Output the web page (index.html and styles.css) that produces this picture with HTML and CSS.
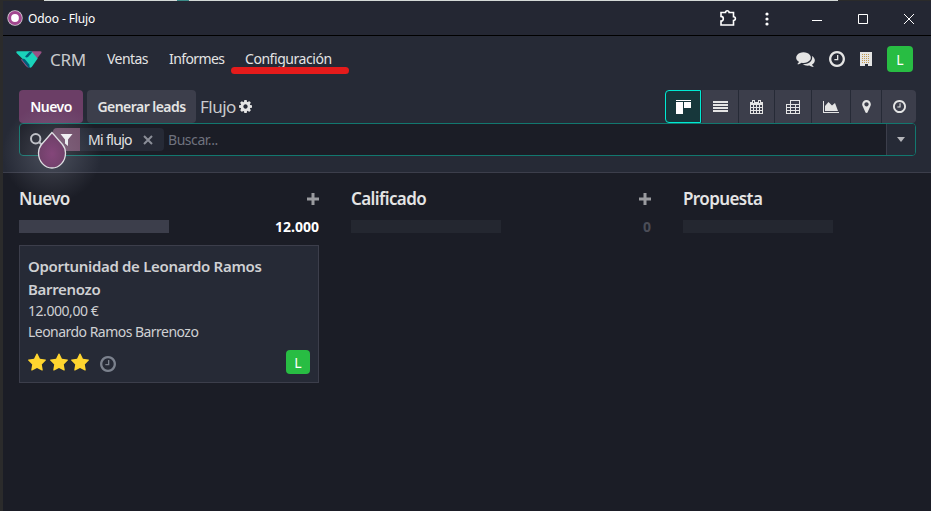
FILE: index.html
```html
<!DOCTYPE html>
<html lang="es">
<head>
<meta charset="utf-8">
<title>Odoo - Flujo</title>
<link rel="stylesheet" href="styles.css">
</head>
<body>
<svg width="0" height="0" class="defs">
  <symbol id="clock" viewBox="128 128 1536 1536"><path d="M1024 544v448q0 14-9 23t-23 9h-320q-14 0-23-9t-9-23v-64q0-14 9-23t23-9h224v-352q0-14 9-23t23-9h64q14 0 23 9t9 23zm416 352q0-148-73-273t-198-198-273-73-273 73-198 198-73 273 73 273 198 198 273 73 273-73 198-198 73-273zm224 0q0 209-103 385.500t-279.500 279.500-385.500 103-385.500-103-279.500-279.500-103-385.500 103-385.500 279.500-279.500 385.500-103 385.500 103 279.500 279.500 103 385.500z"/></symbol>
  <symbol id="star" viewBox="64 32 1664 1587"><path d="M1728 647q0 22-26 48l-363 354 86 500q1 7 1 20 0 21-10.500 35.500t-30.500 14.500q-19 0-40-12l-449-236-449 236q-22 12-40 12-21 0-31.500-14.500t-10.500-35.500q0-6 2-20l86-500-364-354q-25-27-25-48 0-37 56-46l502-73 225-455q19-41 49-41t49 41l225 455 502 73q56 9 56 46z"/></symbol>
  <symbol id="plus" viewBox="0 0 12 12"><path d="M4.500 0h3v4.500H12v3H7.500V12h-3V7.500H0v-3h4.500z"/></symbol>
</svg>
<div class="backdrop"></div>
<div class="window">
  <header class="titlebar">
    <svg class="favicon" viewBox="0 0 16 16"><circle cx="8" cy="8" r="7.700" fill="#d8d3d8"/><circle cx="8" cy="8" r="5.400" fill="#fff" stroke="#a2478f" stroke-width="3"/></svg>
    <span class="wintitle">Odoo - Flujo</span>
    <svg class="puzzle" viewBox="0 0 18 18"><path d="M2 3.500h4.500a1.800 1.800 0 0 1 3.600 0H14.500v4.200a1.900 1.900 0 0 1 0 3.800V16H2v-4a2.300 2.300 0 0 0 0-4.600z"/></svg>
    <svg class="dots" viewBox="0 0 4 14"><circle cx="2" cy="2" r="1.600"/><circle cx="2" cy="7" r="1.600"/><circle cx="2" cy="12" r="1.600"/></svg>
    <svg class="min" viewBox="0 0 10 10"><path d="M0 6.500h10"/></svg>
    <svg class="max" viewBox="0 0 10 10"><path d="M.5.5h9v9h-9z"/></svg>
    <svg class="close" viewBox="0 0 10 10"><path d="M0 0l10 10M10 0L0 10"/></svg>
  </header>
  <nav class="navbar">
    <svg class="logo" viewBox="0 0 27 17"><path d="M14 0h11q2 0 1.500 1.500L21.500 8 14 1z" fill="#985184"/><path d="M5 8.500L10 15q1.500 2 4 2L7 8z" fill="#985184"/><path d="M1.500 0H16l6.500 7.500L16.500 16q-.8 1-2 1L7 8 .8 2Q-.5 0 1.500 0z" fill="#1ad3bb"/><path d="M13 1.500Q14 0 17 0l-1 2-3.500 4q-2 1-3-.5zM6 8.500q2-1.500 3.500 0L14 14v3h-1z" fill="#005e7a"/></svg>
    <span class="app">CRM</span>
    <a class="menu m1">Ventas</a><a class="menu m2">Informes</a><a class="menu m3">Configuración<i class="mark"></i></a>
    <svg class="chat" viewBox="0 128 1792 1536"><path d="M1408 768q0 139-94 257t-256.500 186.500-353.500 68.500q-86 0-176-16-124 88-278 128-36 9-86 16h-3q-11 0-20.500-8t-11.500-21q-1-3-1-6.500t.5-6.500 2-6l2.500-5 3.500-5.500 4-5 4.500-5 4-4.500q5-6 23-25t26-29.500 22.500-29 25-38.500 20.500-44q-124-72-195-177t-71-224q0-139 94-257t256.500-186.500 353.500-68.500 353.500 68.500 256.500 186.500 94 257zm384 256q0 120-71 224.500t-195 176.500q10 24 20.500 44t25 38.500 22.500 29 26 29.500 23 25q1 1 4 4.500t4.500 5 4 5 3.500 5.500l2.500 5 2 6 .5 6.500-1 6.500q-3 14-13 22t-22 7q-50-7-86-16-154-40-278-128-90 16-176 16-271 0-472-132 58 4 88 4 161 0 309-45t264-129q125-92 192-212t67-254q0-77-23-152 129 71 204 178t75 230z"/></svg>
    <svg class="act"><use href="#clock"/></svg>
    <svg class="building" viewBox="0 0 12 14"><path d="M0 0h12v14H8v-2H5v2H0z" fill="#e4e4e4"/><path d="M2 2.500h8M2 4.500h8M2 6.500h8M2 8.500h8M2 10.500h8" stroke="#c39a50" stroke-dasharray="1 1"/></svg>
    <span class="avatar big">L</span>
  </nav>
  <section class="panel">
    <div class="tools">
      <button class="btn primary">Nuevo</button><button class="btn second">Generar leads</button>
      <span class="crumb">Flujo</span>
      <svg class="cog" viewBox="128 128 1536 1536"><path d="M1152 896q0-106-75-181t-181-75-181 75-75 181 75 181 181 75 181-75 75-181zm512-109v222q0 12-8 23t-20 13l-185 28q-19 54-39 91 35 50 107 138 10 12 10 25t-9 23q-27 37-99 108t-94 71q-12 0-26-9l-138-108q-44 23-91 38-16 136-29 186-7 28-36 28h-222q-14 0-24.500-8.500t-11.500-21.500l-28-184q-49-16-90-37l-141 107q-10 9-25 9-14 0-25-11-126-114-165-168-7-10-7-23 0-12 8-23 15-21 51-66.500t54-70.500q-27-50-41-99l-183-27q-13-2-21-12.500t-8-23.500v-222q0-12 8-23t19-13l186-28q14-46 39-92-40-57-107-138-10-12-10-24 0-10 9-23 26-36 98.500-107.500t94.500-71.500q13 0 26 10l138 107q44-23 91-38 16-136 29-186 7-28 36-28h222q14 0 24.500 8.500t11.500 21.500l28 184q49 16 90 37l142-107q9-9 24-9 13 0 25 10 129 119 165 170 7 8 7 22 0 12-8 23-15 21-51 66.500t-54 70.500q26 50 41 98l183 28q13 2 21 12.500t8 23.500z"/></svg>
      <div class="views">
        <span class="view on"><svg width="16" height="14"><path d="M0 0h15v1H0zM0 2h7v12H0zM8 2h7v6H8z"/></svg></span>
        <span class="view"><svg width="15" height="11"><path d="M0 0h15v2H0zM0 3h15v2H0zM0 6h15v2H0zM0 9h15v2H0z"/></svg></span>
        <span class="view"><svg width="13" height="14"><path fill-rule="evenodd" d="M0 2h2V0h3v2h3V0h3v2h2v12H0zM3 1v2h1V1zM9 1v2h1V1zM1 5v2h2V5zM4 5v2h2V5zM7 5v2h2V5zM10 5v2h2V5zM1 8v2h2V8zM4 8v2h2V8zM7 8v2h2V8zM10 8v2h2V8zM1 11v2h2v-2zM4 11v2h2v-2zM7 11v2h2v-2zM10 11v2h2v-2z"/></svg></span>
        <span class="view"><svg width="15" height="14"><path fill-rule="evenodd" d="M0 4h4V0h10v14H0zM5 1v3h8V1zM1 5v2h3V5zM5 5v2h4V5zM10 5v2h3V5zM1 8v2h3V8zM5 8v2h4V8zM10 8v2h3V8zM1 11v2h3v-2zM5 11v2h4v-2zM10 11v2h3v-2z"/></svg></span>
        <span class="view"><svg width="16" height="12"><path d="M0 0h1v11h15v1H0zM2 10V5l3.500-4L9 4.500l3-2.500 3 8z"/></svg></span>
        <span class="view"><svg width="9" height="13" viewBox="384 128 1024 1536"><path d="M1152 640q0-106-75-181t-181-75-181 75-75 181 75 181 181 75 181-75 75-181zm256 0q0 109-33 179l-364 774q-16 33-47.500 52t-67.500 19-67.500-19-46.500-52l-365-774q-33-70-33-179 0-212 150-362t362-150 362 150 150 362z"/></svg></span>
        <span class="view"><svg width="13" height="13"><use href="#clock"/></svg></span>
      </div>
    </div>
    <div class="search">
      <svg class="lens" viewBox="0 0 14 14"><circle cx="5.700" cy="5.700" r="4.700"/><path d="M9 9l4.500 4.500"/></svg>
      <span class="facet"><span class="ficon"><svg viewBox="0 0 12 12"><path d="M0 0h12L7.500 5.500V12l-3-2.500v-4z"/></svg></span><span class="fname">Mi flujo</span><svg class="x" viewBox="0 0 10 10"><path d="M1 1l8 8M9 1L1 9"/></svg></span>
      <span class="hint">Buscar...</span>
      <span class="drop"><i></i></span>
    </div>
    <div class="glow"></div>
    <div class="tip"><svg viewBox="0 0 30 40"><defs><radialGradient id="g" cx=".5" cy=".6" r=".55"><stop offset="0" stop-color="#84467a"/><stop offset="1" stop-color="#6e4068"/></radialGradient></defs><path d="M15 2.500L4.500 14.500A13.300 13.300 0 0 0 1.500 23a13.500 15 0 0 0 27 0 13.300 13.300 0 0 0-3-8.500z" fill="url(#g)" stroke="#dedee2" stroke-width="1.300"/></svg></div>
  </section>
  <main class="board">
    <section class="col">
      <h2><span>Nuevo</span><svg><use href="#plus"/></svg></h2>
      <div class="progress"><span class="bar full"></span><b>12.000</b></div>
      <article class="card">
        <h3>Oportunidad de Leonardo Ramos Barrenozo</h3>
        <p>12.000,00 €</p>
        <p class="partner">Leonardo Ramos Barrenozo</p>
        <footer><svg class="star"><use href="#star"/></svg><svg class="star"><use href="#star"/></svg><svg class="star"><use href="#star"/></svg><svg class="cclock"><use href="#clock"/></svg><span class="avatar">L</span></footer>
      </article>
    </section>
    <section class="col">
      <h2><span>Calificado</span><svg><use href="#plus"/></svg></h2>
      <div class="progress"><span class="bar"></span><b class="zero">0</b></div>
    </section>
    <section class="col last">
      <h2><span>Propuesta</span></h2>
      <div class="progress"><span class="bar"></span></div>
    </section>
  </main>
</div>
</body>
</html>
```
FILE: styles.css
```css
* { box-sizing: border-box; }
body { margin: 0; width: 931px; height: 511px; overflow: hidden; background: #2b2b2b; font: 14px/21px "Noto Sans", "Open Sans", sans-serif; color: #e4e4e4; }
svg { display: block; flex: none; fill: currentColor; }
span, a { white-space: nowrap; }
.defs { position: absolute; }
.backdrop { height: 1px; background: linear-gradient(90deg, #2b2b2b 44px, #d4d9d7 44px, #d4d9d7 177px, #3b8b87 177px, #3b8b87 189px, #d4d9d7 189px, #d4d9d7 838px, #2b2b2b 838px); }
.window { margin-left: 3px; height: 510px; background: #1b1d26; }
.titlebar { height: 35px; display: flex; align-items: center; padding: 0 17px 0 4px; background: #242733; border-bottom: 1px solid #000; color: #fff; }
.favicon { width: 16px; height: 16px; }
.wintitle { font-size: 12px; margin-left: 5px; letter-spacing: -.1px; }
.puzzle { width: 18px; height: 18px; margin-left: auto; fill: none; stroke: #fff; stroke-width: 1.6; }
.dots { width: 4px; height: 14px; margin: 2px 0 0 28px; }
.min, .max, .close { width: 10px; height: 10px; fill: none; stroke: #fff; margin: 2px 0 0 36px; }
.min { margin-left: 43px; }
.navbar { height: 46px; display: flex; align-items: center; background: #262a36; padding: 0 18px 0 13px; }
.logo { width: 26px; height: 17px; }
.app { font-size: 17px; margin-left: 8px; width: 57px; color: #c9cacd; letter-spacing: -.3px; }
.menu { position: relative; top: -1px; width: 62px; letter-spacing: -.55px; }
.m2 { width: 76px; letter-spacing: -.75px; letter-spacing: -.6px; }
.m3 { width: 88px; letter-spacing: -.45px; }
.mark { position: absolute; left: -14px; top: 19px; width: 118px; height: 7px; border-radius: 4px; background: #e41b1b; }
.chat { width: 19px; height: 16px; margin-left: auto; }
.act { width: 16px; height: 16px; margin-left: 14px; }
.building { width: 12px; height: 14px; margin-left: 15px; }
.avatar { display: flex; align-items: center; justify-content: center; width: 24px; height: 24px; border-radius: 4px; background: #28bd43; color: #fff; margin-left: auto; }
.big { width: 26px; height: 26px; margin-left: 15px; }
.panel { position: relative; height: 91px; background: #262a36; border-bottom: 1px solid #3c3e4b; padding: 8px 15px 0 16px; }
.tools { display: flex; height: 33px; align-items: center; }
.btn { height: 33px; border: 0; border-radius: 4px; padding: 0; font: 600 14px "Noto Sans", sans-serif; color: #e4e4e4; letter-spacing: -.55px; background: #3c3e4b; white-space: nowrap; }
.primary { width: 64px; background: #6b3e66; color: #fff; letter-spacing: -.5px; }
.second { width: 109px; margin-left: 4px; }
.crumb { font-size: 17px; margin-left: 4px; width: 39px; letter-spacing: -.5px; color: #c9cacd; }
.cog { width: 13px; height: 13px; }
.views { display: flex; gap: 1px; margin-left: auto; }
.view { display: flex; align-items: center; justify-content: center; width: 36px; height: 33px; background: #3c3e4b; }
.view:nth-child(3) { width: 35px; }
.view:nth-child(5) { width: 38px; }
.view:nth-child(6) { width: 30px; }
.view:nth-child(7) { width: 34px; border-radius: 0 4px 4px 0; }
.view.on { padding-left: 1px; background: #17373b; border: 1px solid #00ead2; border-radius: 4px 0 0 4px; color: #fff; }
.search { display: flex; align-items: center; height: 33px; border: 1px solid #12786f; border-radius: 4px; background: #1b1d26; padding-left: 10px; overflow: hidden; }
.lens { width: 14px; height: 14px; fill: none; stroke: #c5c6ca; stroke-width: 2; }
.facet { display: flex; align-items: center; height: 23px; width: 111px; margin-left: 9px; background: #262a36; border-radius: 4px; overflow: hidden; }
.ficon { width: 27px; height: 23px; display: flex; align-items: center; padding-left: 7px; background: #714b67; color: #fff; }
.ficon svg { width: 13px; height: 12px; }
.fname { margin-left: 8px; width: 55px; letter-spacing: -.65px; }
.x { width: 10px; height: 10px; fill: none; stroke: #8b8e98; stroke-width: 2; }
.hint { margin-left: 4px; color: #6f727e; letter-spacing: -.45px; }
.drop { margin-left: auto; width: 29px; height: 31px; display: flex; justify-content: center; align-items: center; background: #262a36; border-left: 1px solid #3c3e4b; }
.drop i { border: 4px solid transparent; border-top: 5px solid #b5b6bb; border-bottom: 0; }
.glow { position: absolute; left: -1px; top: 21px; width: 100px; height: 100px; background: radial-gradient(circle, rgba(160, 165, 180, .26) 10%, rgba(160, 165, 180, 0) 70%); }
.tip { position: absolute; left: 34px; top: 48px; width: 30px; height: 40px; }
.board { display: flex; gap: 32px; padding: 15px 16px 0; }
.col { width: 300px; flex: none; }
.last { flex: 1; width: auto; }
h2 { margin: 0; height: 21px; display: flex; align-items: center; justify-content: space-between; font-size: 17px; font-weight: 600; letter-spacing: -.6px; }
h2 svg { width: 12px; height: 12px; color: #9a9b9f; }
.progress { display: flex; align-items: center; justify-content: space-between; height: 13px; margin: 11px 0 12px; }
.bar { width: 150px; height: 13px; background: #242730; }
.full { background: #3c3e4b; }
.progress b { color: #fff; letter-spacing: 0; }
.progress .zero { color: #4b4d57; }
.card { height: 138px; border: 1px solid #3c3e4b; background: #262a36; padding: 9px 8px 0; color: #cfd0d3; }
h3 { margin: 0; font-size: 15px; line-height: 23px; font-weight: 600; letter-spacing: -.32px; }
p { margin: 0; letter-spacing: -.45px; position: relative; top: -1px; }
.partner { letter-spacing: -.53px; }
footer { display: flex; align-items: center; height: 24px; margin-top: 7px; }
.star { width: 18px; height: 18px; color: #ffd52f; margin: -1px 3.500px 0 0; }
.cclock { width: 16px; height: 16px; margin: 3px 0 0 7px; color: #7b818d; }
```
